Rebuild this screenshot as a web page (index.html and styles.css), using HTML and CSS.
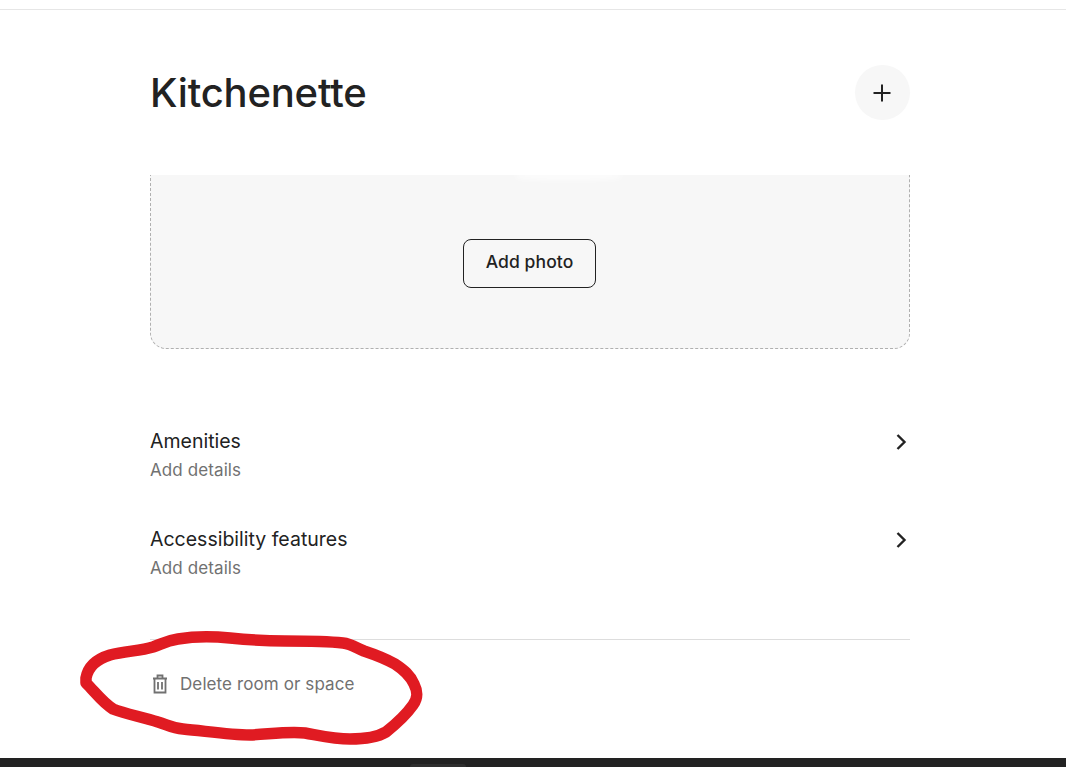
FILE: index.html
```html
<!DOCTYPE html>
<html lang="en">
<head>
<meta charset="utf-8">
<title>Kitchenette</title>
<link rel="stylesheet" href="styles.css">
</head>
<body>
<div class="page">
  <div class="topbar"></div>
  <main class="content">
    <header class="head">
      <h1 class="title">Kitchenette</h1>
      <button class="add-round" aria-label="Add">
        <svg class="plus" viewBox="0 0 18 18" width="18" height="18"><path d="M9 0.5v17M0.5 9h17"/></svg>
      </button>
    </header>
    <section class="photo-box">
      <div class="photo-shadow"></div>
      <button class="add-photo">Add photo</button>
    </section>
    <a class="row row-first">
      <div><div class="row-title">Amenities</div><div class="row-sub">Add details</div></div>
      <svg class="chev" viewBox="0 0 12 18" width="12" height="18"><path d="M2.5 2l7 7-7 7"/></svg>
    </a>
    <a class="row row-second">
      <div><div class="row-title">Accessibility features</div><div class="row-sub">Add details</div></div>
      <svg class="chev" viewBox="0 0 12 18" width="12" height="18"><path d="M2.5 2l7 7-7 7"/></svg>
    </a>
    <div class="delete">
      <svg class="trash" viewBox="0 0 18 20" width="18" height="20"><path d="M2 4.5h14M3.5 4.5v14h11v-14M6.5 4.5v-3h5v3M7 8v7.5M11 8v7.5"/></svg>
      <span>Delete room or space</span>
    </div>
  </main>
  <footer class="dark"><span class="notch"></span></footer>
</div>
<svg class="scribble" viewBox="0 0 1066 767" width="1066" height="767"><path d="M86 678C88 667 97 659 110 655C125 651 140 651 153 647C162 644 165 641 178 639C195 636 212 636 230 638C250 640 265 641 285 641C305 641 325 641 343 643C352 644 356 648 364 651C376 655 386 659 395 664C404 670 410 675 414 684C418 692 418 698 413 705C406 715 396 724 386 732C376 738 363 739 350 739C335 739 322 736 305 733C290 731 270 734 250 735C230 735 205 731 183 729C172 728 168 725 158 722C143 717 125 714 113 709C103 703 95 692 86 683Z"/></svg>
</body>
</html>
```
FILE: styles.css
```css
html, body { margin: 0; padding: 0; background: #fff; overflow: hidden; }
body { font-family: Inter, "Liberation Sans", sans-serif; color: #222; }
.page { height: 767px; display: flex; flex-direction: column; }
.topbar { height: 9px; flex: none; border-bottom: 1px solid #e6e6e6; }
.content { flex: 1; width: 760px; margin-left: 150px; display: flex; flex-direction: column; min-height: 0; }
.head { display: flex; justify-content: space-between; align-items: center; height: 55px; margin-top: 55px; }
.title { margin: 0; font-size: 40px; font-weight: 500; line-height: 55px; letter-spacing: -0.2px; color: #222; }
.add-round { width: 55px; height: 55px; border-radius: 50%; border: 0; padding: 0 1px 0 0; background: #f7f7f7; display: flex; align-items: center; justify-content: center; }
.plus { fill: none; stroke: #222; stroke-width: 2; }
.photo-box { position: relative; margin-top: 55px; height: 174px; box-sizing: border-box; background: #f7f7f7; border: 1px dashed #b0b0b0; border-top: 0; border-radius: 0 0 16px 16px; display: flex; align-items: flex-start; justify-content: center; padding-top: 64px; }
.photo-shadow { position: absolute; left: 365px; top: -1px; width: 105px; height: 5px; background: #fff; border-radius: 0 0 50% 50%; filter: blur(3px); }
.add-photo { width: 133px; height: 49px; box-sizing: border-box; background: #f7f7f7; border: 1px solid #222; border-radius: 8px; font: 500 17.5px/44px Inter, "Liberation Sans", sans-serif; letter-spacing: 0.1px; color: #222; padding: 0 0 3px; margin-right: 1px; }
.row { display: flex; justify-content: space-between; align-items: flex-start; }
.row-first { margin-top: 78px; }
.row-second { margin-top: 41px; }
.row-title { font-size: 19.5px; line-height: 28px; color: #222; }
.row-sub { font-size: 17px; line-height: 28px; margin-top: 1px; letter-spacing: 0.1px; color: #717171; }
.chev { fill: none; stroke: #222; stroke-width: 2.4; margin: 6px 3px 0 0; }
.delete { margin-top: 57px; padding-top: 31px; border-top: 1px solid #ddd; display: flex; align-items: center; gap: 11px; font-size: 17px; line-height: 26px; letter-spacing: 0.1px; color: #717171; }
.trash { fill: none; stroke: #717171; stroke-width: 1.8; margin-left: 1px; }
.dark { flex: none; height: 9px; background: #222; position: relative; }
.notch { position: absolute; left: 410px; top: 6px; width: 56px; height: 3px; border-radius: 3px 3px 0 0; background: #2e2e2e; }
.scribble { position: absolute; left: 0; top: 0; pointer-events: none; }
.scribble path { fill: none; stroke: #e01b22; stroke-width: 11.5; stroke-linejoin: round; }
```
